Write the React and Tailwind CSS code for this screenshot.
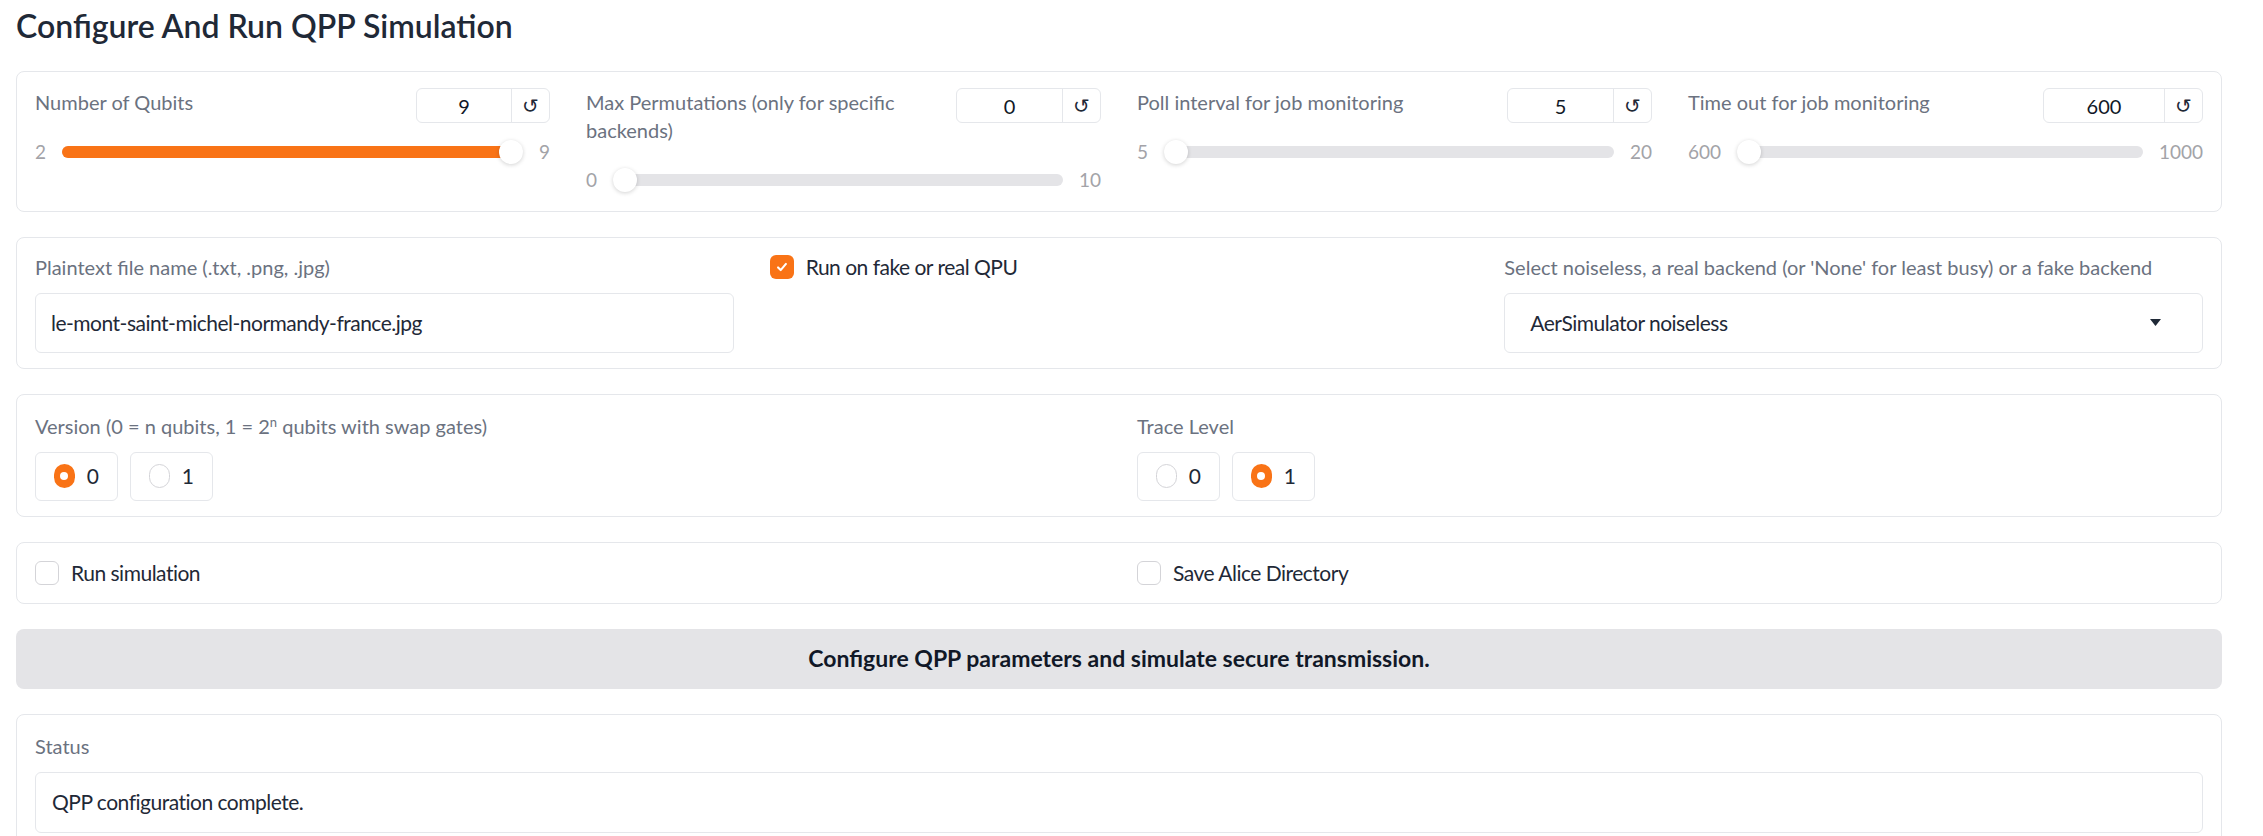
import React from 'react'

const SLIDERS = [
  { label: 'Number of Qubits', value: 9, min: 2, max: 9, numW: 'w-[94px]' },
  { label: 'Max Permutations (only for specific backends)', value: 0, min: 0, max: 10, numW: 'w-[105px]' },
  { label: 'Poll interval for job monitoring', value: 5, min: 5, max: 20, numW: 'w-[105px]' },
  { label: 'Time out for job monitoring', value: 600, min: 600, max: 1000, numW: 'w-[120px]' },
]

function Box({ className = '', children }) {
  return (
    <div className={`rounded-lg border border-[#e5e7eb] bg-white px-[18px] ${className}`}>{children}</div>
  )
}

function Label({ children, className = '' }) {
  return <span className={`block text-[20px] leading-[28px] text-[#6b7280] ${className}`}>{children}</span>
}

function Slider({ label, value, min, max, numW }) {
  const pct = (value - min) / (max - min)
  return (
    <div className="flex flex-col">
      <div className="flex items-start justify-between gap-4">
        <Label className="mb-[14px] pr-2">{label}</Label>
        <div className="flex h-[35px] shrink-0 rounded-md border border-[#e5e7eb]">
          <div className={`${numW} flex items-center justify-center text-[20px] text-[#111827]`}>{value}</div>
          <div className="flex w-[38px] items-center justify-center border-l border-[#e5e7eb] font-['DejaVu_Sans',sans-serif] text-[20px] text-[#1f2937]">
            ↺
          </div>
        </div>
      </div>
      <div className="mt-[8px] flex items-center gap-[16px] text-[19px] text-[#a3a3a8]">
        <span>{min}</span>
        <div className="relative h-[12px] flex-1 rounded-full bg-[#e4e4e7]">
          {pct > 0 && (
            <div
              className="h-full rounded-full bg-[#f97316]"
              style={{ width: `calc(${pct} * (100% - 24px) + 12px)` }}
            />
          )}
          <div
            className="absolute top-1/2 h-[24px] w-[24px] -translate-y-1/2 rounded-full bg-white shadow-[0_1px_4px_rgba(0,0,0,0.18)]"
            style={{ left: `calc(${pct} * (100% - 24px))` }}
          />
        </div>
        <span>{max}</span>
      </div>
    </div>
  )
}

function Checkbox({ checked, label }) {
  return (
    <label className="flex items-center gap-3">
      <span
        className={`flex h-[24px] w-[24px] items-center justify-center rounded-md ${
          checked ? 'bg-[#f97316]' : 'border border-[#d4d4d8] bg-white'
        }`}
      >
        {checked && (
          <svg width="14" height="14" viewBox="0 0 16 16" fill="none">
            <path d="M3.5 8.5l3 3 6-7" stroke="white" strokeWidth="2.4" strokeLinecap="round" strokeLinejoin="round" />
          </svg>
        )}
      </span>
      <span className="text-[21px] leading-[28px] tracking-[-0.5px] text-[#1f2937]">{label}</span>
    </label>
  )
}

function Radio({ options, selected }) {
  return (
    <div className="flex gap-3">
      {options.map((o) => (
        <div
          key={o}
          className="flex h-[49px] w-[83px] items-center gap-3 rounded-md border border-[#e5e7eb] px-[18px]"
        >
          {o === selected ? (
            <span className="flex h-[24px] w-[24px] items-center justify-center rounded-full bg-[#f97316]">
              <span className="h-[8px] w-[8px] rounded-full bg-white" />
            </span>
          ) : (
            <span className="h-[24px] w-[24px] rounded-full border border-[#d4d4d8] bg-white" />
          )}
          <span className="text-[21px] text-[#1f2937]">{o}</span>
        </div>
      ))}
    </div>
  )
}

export default function App() {
  return (
    <div className="min-h-screen bg-white pl-4 pr-[41px] font-['Lato','Liberation_Sans',sans-serif]">
      <h2 className="pt-[8px] text-[32px] font-semibold leading-[36px] text-[#1f2937]">
        Configure And Run QPP Simulation
      </h2>

      <div className="mt-[27px] flex flex-col gap-[25px]">
        <Box className="pt-[16px] pb-[16px]">
          <div className="grid grid-cols-4 gap-x-[36px]">
            {SLIDERS.map((s) => (
              <Slider key={s.label} {...s} />
            ))}
          </div>
        </Box>

        <Box className="pt-[15px] pb-[15px]">
          <div className="grid grid-cols-3 gap-x-[36px]">
            <div>
              <Label>Plaintext file name (.txt, .png, .jpg)</Label>
              <div className="mt-[12px] flex h-[60px] items-center rounded-md border border-[#e5e7eb] px-[15px] text-[21px] tracking-[-0.5px] text-[#1f2937]">
                le-mont-saint-michel-normandy-france.jpg
              </div>
            </div>
            <div>
              <Checkbox checked label="Run on fake or real QPU" />
            </div>
            <div>
              <Label>Select noiseless, a real backend (or 'None' for least busy) or a fake backend</Label>
              <div className="mt-[12px] flex h-[60px] items-center justify-between rounded-md border border-[#e5e7eb] pl-[25px] pr-[41px] text-[21px] tracking-[-0.5px] text-[#1f2937]">
                <span>AerSimulator noiseless</span>
                <svg width="11" height="7" viewBox="0 0 11 7">
                  <path d="M0 0h11L5.5 7z" fill="#1f2937" />
                </svg>
              </div>
            </div>
          </div>
        </Box>

        <Box className="pt-[17px] pb-[15px]">
          <div className="grid grid-cols-2 gap-x-[36px]">
            <div>
              <Label>
                Version (0 = n qubits, 1 = 2<sup className="text-[13px]">n</sup> qubits with swap gates)
              </Label>
              <div className="mt-[12px]">
                <Radio options={['0', '1']} selected="0" />
              </div>
            </div>
            <div>
              <Label>Trace Level</Label>
              <div className="mt-[12px]">
                <Radio options={['0', '1']} selected="1" />
              </div>
            </div>
          </div>
        </Box>

        <Box className="py-[16px]">
          <div className="grid grid-cols-2 gap-x-[36px]">
            <Checkbox label="Run simulation" />
            <Checkbox label="Save Alice Directory" />
          </div>
        </Box>

        <button className="flex h-[60px] w-full items-center justify-center rounded-lg bg-[#e4e4e7] text-[23px] font-bold text-[#111827]">
          Configure QPP parameters and simulate secure transmission.
        </button>

        <Box className="pt-[17px] pb-[16px]">
          <Label>Status</Label>
          <div className="mt-[12px] flex h-[61px] items-center rounded-md border border-[#e5e7eb] px-[16px] text-[21px] tracking-[-0.5px] text-[#1f2937]">
            QPP configuration complete.
          </div>
        </Box>
      </div>
    </div>
  )
}
